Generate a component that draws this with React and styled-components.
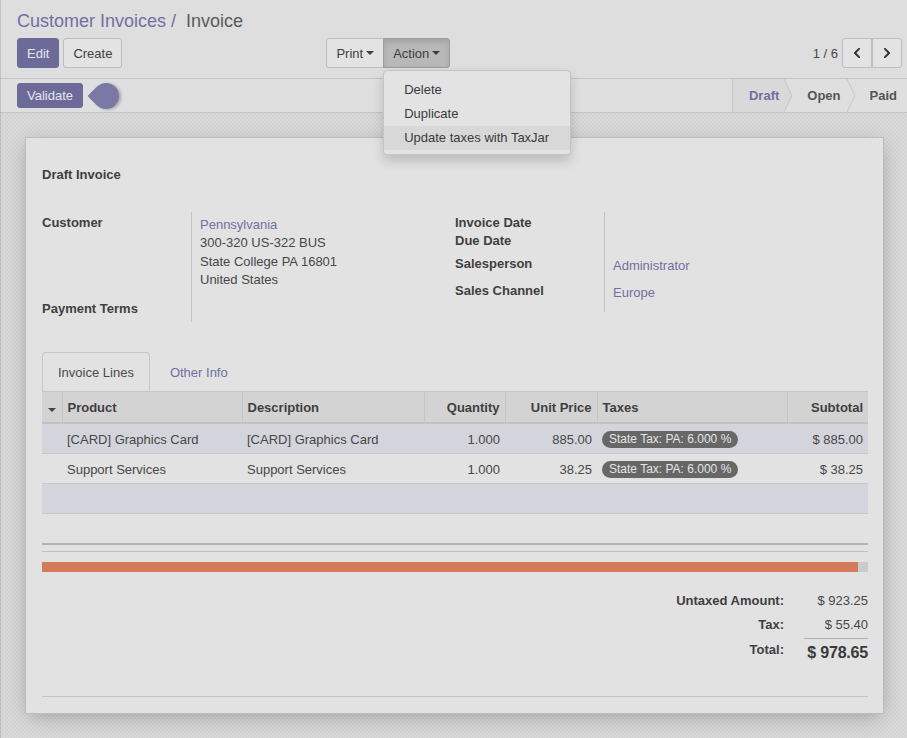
import React from 'react';
import styled, { createGlobalStyle } from 'styled-components';
import { FaChevronLeft, FaChevronRight } from 'react-icons/fa';

const GlobalStyle = createGlobalStyle`
  html, body {
    margin: 0;
    padding: 0;
  }
  body {
    font-family: "Liberation Sans", Arial, sans-serif;
    font-size: 13px;
    color: #474747;
    background: #d9d9d9;
  }
`;

const purple = '#6c6a99';
const link = '#716fa2';

const Page = styled.div`
  position: relative;
  width: 907px;
  height: 738px;
  display: flex;
  flex-direction: column;
  overflow: hidden;

  &::after {
    content: '';
    position: absolute;
    left: 0;
    top: 0;
    bottom: 0;
    width: 1px;
    background: rgba(0, 0, 0, 0.12);
  }
`;

const ControlPanel = styled.div`
  background: #dedede;
  border-bottom: 1px solid #c3c3c3;
  padding: 10px 5px 10px 17px;
`;

const Breadcrumb = styled.div`
  font-size: 18px;
  line-height: 22px;
  height: 22px;
  margin-bottom: 6px;
  white-space: nowrap;
`;

const Crumb = styled.span`
  color: ${link};
`;

const Current = styled.span`
  color: #5a5a5a;
  margin-left: 10px;
`;

const ButtonsRow = styled.div`
  display: flex;
  align-items: center;
  height: 30px;
`;

const Button = styled.button`
  height: 30px;
  padding: 0 9px;
  font-family: inherit;
  font-size: 13px;
  border-radius: 3px;
  border: 1px solid ${(p) => (p.$primary ? purple : p.$active ? '#9d9d9d' : '#bdbdbd')};
  background: ${(p) => (p.$primary ? purple : p.$active ? '#b8b8b8' : '#e3e3e3')};
  color: ${(p) => (p.$primary ? '#e6e6ee' : '#3e3e3e')};
  box-shadow: ${(p) => (p.$active ? 'inset 0 3px 5px rgba(0,0,0,0.12)' : 'none')};
  display: inline-flex;
  align-items: center;
  margin-right: ${(p) => p.$mr || 0}px;
`;

const ButtonGroup = styled.div`
  display: flex;
  margin-left: ${(p) => p.$ml || 0}px;

  & > * > button,
  & > button {
    border-radius: 0;
  }
  & > :first-child,
  & > :first-child > button {
    border-radius: 3px 0 0 3px;
  }
  & > :last-child,
  & > :last-child > button {
    border-radius: 0 3px 3px 0;
  }
`;

const Caret = styled.span`
  display: inline-block;
  width: 0;
  height: 0;
  margin-left: 3px;
  border-top: 4px solid currentColor;
  border-left: 4px solid transparent;
  border-right: 4px solid transparent;
`;

const DropWrap = styled.div`
  position: relative;
  display: flex;
  margin-left: -1px;
`;

const Menu = styled.ul`
  position: absolute;
  top: calc(100% + 2px);
  left: 0;
  z-index: 5;
  margin: 0;
  list-style: none;
  width: 188px;
  box-sizing: border-box;
  padding: 7px 0 4px;
  background: #e3e3e3;
  border: 1px solid #c4c4c4;
  border-radius: 4px;
  box-shadow: 0 6px 12px rgba(0, 0, 0, 0.17);
`;

const MenuItem = styled.li`
  padding: 0 20px;
  line-height: 24px;
  color: #3a3a3a;
  white-space: nowrap;
  background: ${(p) => (p.$hover ? '#d8d8d8' : 'transparent')};
`;

const Pager = styled.div`
  margin-left: auto;
  display: flex;
  align-items: center;
`;

const PagerValue = styled.span`
  color: #474747;
  margin-right: 4px;
`;

const PagerButton = styled(Button)`
  width: 30px;
  justify-content: center;
  padding: 0;
  color: #2e2e2e;
  font-size: 12px;
`;

const StatusBar = styled.div`
  height: 33px;
  background: #dfdfdf;
  border-bottom: 1px solid #c3c3c3;
  display: flex;
  align-items: center;
  padding-left: 17px;
`;

const ValidateWrap = styled.div`
  position: relative;
  display: flex;
`;

const ValidateButton = styled(Button)`
  height: 25px;
  padding: 0 9px;
`;

const Bubble = styled.span`
  position: absolute;
  left: calc(100% + 10px);
  top: 50%;
  width: 26px;
  height: 26px;
  margin-top: -13px;
  background: #7a78a6;
  border-radius: 0 50% 50% 50%;
  transform: rotate(-45deg);
  box-shadow: 1px 2px 3px rgba(0, 0, 0, 0.25);
`;

const Steps = styled.div`
  margin-left: auto;
  height: 100%;
  display: flex;
  border-left: 1px solid #c6c6c6;
`;

const Step = styled.div`
  display: flex;
  align-items: center;
  font-weight: bold;
  padding: 0 ${(p) => p.$pr}px 0 ${(p) => p.$pl}px;
  color: ${(p) => (p.$current ? link : '#555')};
  background: ${(p) => (p.$current ? '#d9d9d9' : 'transparent')};
`;

const Arrow = ({ fill }) => (
  <svg width="8" height="33" viewBox="0 0 8 33">
    <polygon points="0,0 8,16.5 0,33" fill={fill || 'transparent'} />
    <polyline points="0,0 8,16.5 0,33" fill="none" stroke="#c6c6c6" strokeWidth="1" />
  </svg>
);

const SheetArea = styled.div`
  flex: 1;
  padding: 24px 23px 0 25px;
  background-color: #dadada;
  background-image: conic-gradient(#d3d3d3 25%, transparent 0 50%, #d3d3d3 0 75%, transparent 0);
  background-size: 4px 4px;
`;

const Sheet = styled.div`
  background: #e2e2e2;
  border: 1px solid #bcbcbc;
  box-shadow: 0 5px 20px -4px rgba(0, 0, 0, 0.3);
  padding: 28px 15px 16px 16px;
`;

const Title = styled.div`
  font-weight: bold;
  line-height: 18px;
  color: #3f3f3f;
  margin-bottom: 28px;
`;

const Groups = styled.div`
  display: grid;
  grid-template-columns: 413px 413px;
  align-items: start;
`;

const FieldGroup = styled.div`
  display: flex;
  flex-direction: column;
`;

const FieldRow = styled.div`
  display: grid;
  grid-template-columns: 149px 1fr;
  height: ${(p) => p.$h}px;
`;

const Label = styled.div`
  font-weight: bold;
  color: #3f3f3f;
  line-height: 18px;
  padding-top: ${(p) => p.$pt || 0}px;
`;

const Value = styled.div`
  border-left: 1px solid #c4c4c4;
  padding-left: 8px;
  padding-top: ${(p) => p.$pt || 0}px;
  line-height: ${(p) => p.$lh || 18}px;
  color: #474747;
`;

const LinkText = styled.div`
  color: ${link};
`;

const TabBar = styled.div`
  margin-top: 30px;
  display: flex;
  align-items: flex-end;
  height: 39px;
`;

const Tab = styled.div`
  height: 39px;
  box-sizing: border-box;
  display: flex;
  align-items: center;
  padding: 1px 15px 0;
  margin-left: ${(p) => p.$ml || 0}px;
  color: ${(p) => (p.$active ? '#4a4a4a' : link)};
  border: 1px solid ${(p) => (p.$active ? '#c6c6c6' : 'transparent')};
  border-bottom: none;
  border-radius: 4px 4px 0 0;
`;

const Table = styled.table`
  width: 826px;
  border-collapse: collapse;
  table-layout: fixed;
`;

const Th = styled.th`
  height: 30px;
  padding: 0 5px;
  background: #d3d3d3;
  border-top: 1px solid #c6c6c6;
  border-left: 1px solid #c6c6c6;
  border-bottom: 2px solid #c2c2c2;
  font-weight: bold;
  color: #3f3f3f;
  text-align: ${(p) => p.$align || 'left'};
  white-space: nowrap;

  &:first-child {
    border-left: none;
  }
`;

const Tr = styled.tr`
  background: ${(p) => (p.$alt ? '#d4d4dc' : '#e2e2e2')};
`;

const Td = styled.td`
  height: 28px;
  padding: 1px 5px 0;
  border-bottom: 1px solid #c8c8c8;
  text-align: ${(p) => p.$align || 'left'};
  white-space: nowrap;
  color: #474747;
`;

const SortCaret = styled(Caret)`
  margin-left: 0;
  color: #444;
`;

const TaxBadge = styled.span`
  display: inline-block;
  background: #676767;
  color: #e4e4e4;
  font-size: 12px;
  line-height: 17px;
  padding: 0 7px;
  border-radius: 9px;
`;

const ListFooter = styled.div`
  margin-top: 29px;
  height: 6px;
  border-top: 2px solid #b3b3b3;
  border-bottom: 1px solid #bfbfbf;
`;

const Progress = styled.div`
  margin-top: 10px;
  height: 10px;
  background: #cbcbcb;
`;

const ProgressFill = styled.div`
  height: 100%;
  background: #d47c5a;
`;

const Totals = styled.div`
  margin-top: 20px;
  display: grid;
  grid-template-columns: max-content 64px;
  column-gap: 20px;
  justify-content: end;
`;

const TotalLabel = styled.div`
  font-weight: bold;
  text-align: right;
  line-height: 18px;
  color: #3f3f3f;
  padding-top: ${(p) => p.$pt || 0}px;
  padding-bottom: ${(p) => p.$pb || 0}px;
`;

const TotalValue = styled.div`
  text-align: right;
  white-space: nowrap;
  line-height: ${(p) => (p.$big ? 22 : 18)}px;
  font-size: ${(p) => (p.$big ? 16 : 13)}px;
  font-weight: ${(p) => (p.$big ? 'bold' : 'normal')};
  letter-spacing: ${(p) => (p.$big ? '-0.2px' : 'normal')};
  color: ${(p) => (p.$big ? '#3a3a3a' : '#474747')};
  border-top: ${(p) => (p.$big ? '1px solid #b0b0b0' : 'none')};
  padding-top: ${(p) => p.$pt || 0}px;
  padding-bottom: ${(p) => p.$pb || 0}px;
`;

const BottomLine = styled.div`
  margin-top: 32px;
  border-top: 1px solid #c4c4c4;
`;

const lines = [
  { product: '[CARD] Graphics Card', qty: '1.000', price: '885.00', subtotal: '$ 885.00' },
  { product: 'Support Services', qty: '1.000', price: '38.25', subtotal: '$ 38.25' },
];

export default function App() {
  return (
    <Page>
      <GlobalStyle />
      <ControlPanel>
        <Breadcrumb>
          <Crumb>Customer Invoices /</Crumb>
          <Current>Invoice</Current>
        </Breadcrumb>
        <ButtonsRow>
          <Button $primary $mr={4}>Edit</Button>
          <Button>Create</Button>
          <ButtonGroup $ml={204}>
            <Button>
              Print<Caret />
            </Button>
            <DropWrap>
              <Button $active>
                Action<Caret />
              </Button>
              <Menu>
                <MenuItem>Delete</MenuItem>
                <MenuItem>Duplicate</MenuItem>
                <MenuItem $hover>Update taxes with TaxJar</MenuItem>
              </Menu>
            </DropWrap>
          </ButtonGroup>
          <Pager>
            <PagerValue>1 / 6</PagerValue>
            <ButtonGroup>
              <PagerButton>
                <FaChevronLeft />
              </PagerButton>
              <PagerButton>
                <FaChevronRight />
              </PagerButton>
            </ButtonGroup>
          </Pager>
        </ButtonsRow>
      </ControlPanel>

      <StatusBar>
        <ValidateWrap>
          <ValidateButton $primary>Validate</ValidateButton>
          <Bubble />
        </ValidateWrap>
        <Steps>
          <Step $current $pl={16} $pr={5}>Draft</Step>
          <Arrow fill="#d9d9d9" />
          <Step $pl={15} $pr={6}>Open</Step>
          <Arrow />
          <Step $pl={15} $pr={10}>Paid</Step>
        </Steps>
      </StatusBar>

      <SheetArea>
        <Sheet>
          <Title>Draft Invoice</Title>
          <Groups>
            <FieldGroup>
              <FieldRow $h={82}>
                <Label $pt={2}>Customer</Label>
                <Value $pt={4} $lh={18.4}>
                  <LinkText>Pennsylvania</LinkText>
                  <div>300-320 US-322 BUS</div>
                  <div>State College PA 16801</div>
                  <div>United States</div>
                </Value>
              </FieldRow>
              <FieldRow $h={28}>
                <Label $pt={6}>Payment Terms</Label>
                <Value />
              </FieldRow>
            </FieldGroup>
            <FieldGroup>
              <FieldRow $h={19}>
                <Label $pt={2}>Invoice Date</Label>
                <Value />
              </FieldRow>
              <FieldRow $h={18}>
                <Label $pt={1}>Due Date</Label>
                <Value />
              </FieldRow>
              <FieldRow $h={27}>
                <Label $pt={6}>Salesperson</Label>
                <Value $pt={8}>
                  <LinkText>Administrator</LinkText>
                </Value>
              </FieldRow>
              <FieldRow $h={27}>
                <Label $pt={6}>Sales Channel</Label>
                <Value $pt={8}>
                  <LinkText>Europe</LinkText>
                </Value>
              </FieldRow>
              <FieldRow $h={9}>
                <div />
                <Value />
              </FieldRow>
            </FieldGroup>
          </Groups>

          <TabBar>
            <Tab $active>Invoice Lines</Tab>
            <Tab $ml={4}>Other Info</Tab>
          </TabBar>
          <Table>
            <colgroup>
              <col style={{ width: 20 }} />
              <col style={{ width: 180 }} />
              <col style={{ width: 182 }} />
              <col style={{ width: 81 }} />
              <col style={{ width: 92 }} />
              <col style={{ width: 190 }} />
              <col style={{ width: 81 }} />
            </colgroup>
            <thead>
              <tr>
                <Th $align="center">
                  <SortCaret />
                </Th>
                <Th>Product</Th>
                <Th>Description</Th>
                <Th $align="right">Quantity</Th>
                <Th $align="right">Unit Price</Th>
                <Th>Taxes</Th>
                <Th $align="right">Subtotal</Th>
              </tr>
            </thead>
            <tbody>
              {lines.map((l, i) => (
                <Tr key={l.product} $alt={i % 2 === 0}>
                  <Td />
                  <Td>{l.product}</Td>
                  <Td>{l.product}</Td>
                  <Td $align="right">{l.qty}</Td>
                  <Td $align="right">{l.price}</Td>
                  <Td>
                    <TaxBadge>State Tax: PA: 6.000 %</TaxBadge>
                  </Td>
                  <Td $align="right">{l.subtotal}</Td>
                </Tr>
              ))}
              <Tr $alt>
                <Td colSpan={7} />
              </Tr>
            </tbody>
          </Table>

          <ListFooter />
          <Progress>
            <ProgressFill style={{ width: `${(816 / 826) * 100}%` }} />
          </Progress>

          <Totals>
            <TotalLabel $pb={6}>Untaxed Amount:</TotalLabel>
            <TotalValue $pb={6}>$ 923.25</TotalValue>
            <TotalLabel $pb={4}>Tax:</TotalLabel>
            <TotalValue $pb={4}>$ 55.40</TotalValue>
            <TotalLabel $pt={3}>Total:</TotalLabel>
            <TotalValue $big $pt={3}>$ 978.65</TotalValue>
          </Totals>
          <BottomLine />
        </Sheet>
      </SheetArea>
    </Page>
  );
}
